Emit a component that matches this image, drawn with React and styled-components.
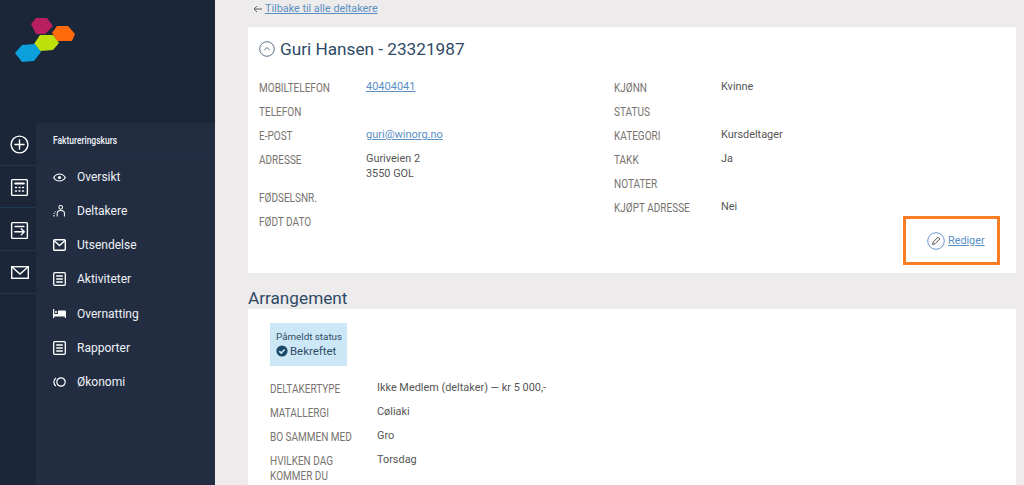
import React from 'react';
import styled, { createGlobalStyle } from 'styled-components';

const Global = createGlobalStyle`
  html, body {
    margin: 0;
    height: 485px;
    overflow: hidden;
    background: #edebeb;
    font-family: Roboto, "Liberation Sans", sans-serif;
  }
  * { box-sizing: border-box; }
`;

const Page = styled.div`
  display: flex;
  width: 1024px;
  height: 485px;
  overflow: hidden;
`;

const Sidebar = styled.aside`
  width: 215px;
  flex: none;
  display: flex;
  flex-direction: column;
  background: #1c2639;
`;

const LogoBox = styled.div`
  height: 123px;
  flex: none;
  padding: 17px 0 0 14px;
`;

const SideBody = styled.div`
  display: flex;
  flex: 1;
`;

const Rail = styled.div`
  width: 36px;
  flex: none;
`;

const RailItem = styled.div`
  height: 42.7px;
  display: flex;
  align-items: center;
  justify-content: center;
  padding: 2px 0 0 3px;
  border-bottom: 1px solid #1d3a55;
  color: #fff;
`;

const Panel = styled.nav`
  flex: 1;
  background: #222d42;
`;

const PanelHead = styled.div`
  height: 37px;
  padding: 0 0 1px 17px;
  display: flex;
  align-items: center;
  border-bottom: 1px solid #1e3048;
  color: #f2f4f7;
  font-size: 11px;
  font-weight: 500;
`;

const Squeeze = styled.span`
  display: inline-block;
  transform: scaleX(${p => p.$x || 0.77});
  transform-origin: left center;
  white-space: nowrap;
`;

const NavItem = styled.div`
  height: 34.15px;
  display: flex;
  align-items: center;
  padding-left: 17px;
  gap: 11px;
  color: #eef1f5;
  font-size: 12px;
  font-weight: 400;
`;

const NavIcon = styled.span`
  width: 13px;
  height: 14px;
  display: flex;
  align-items: center;
  justify-content: center;
  color: #fff;
`;

const Main = styled.main`
  flex: 1;
  padding: 0 8px 0 33px;
  min-width: 0;
`;

const BackRow = styled.div`
  height: 27px;
  display: flex;
  align-items: flex-start;
  padding: 2px 0 0 5px;
  gap: 3px;
  line-height: 14px;
  color: #5b6570;
`;

const BackArrow = styled.svg`
  margin-top: 3px;
`;

const Link = styled.a`
  color: #5a8fc4;
  text-decoration: underline;
  font-size: ${p => p.$size || '10.8px'};
`;

const Card = styled.section`
  position: relative;
  background: #fff;
  box-shadow: 0 0 1px rgba(0, 0, 0, 0.08);
`;

const PersonCard = styled(Card)`
  height: 246px;
  padding: 9px 11px 0;
`;

const Title = styled.h1`
  margin: 0 0 18px;
  height: 25px;
  display: flex;
  align-items: center;
  gap: 5px;
  font-size: 17.2px;
  font-weight: 400;
  color: #2f4a66;
`;

const Columns = styled.div`
  display: grid;
  grid-template-columns: 355px 1fr;
`;

const Row = styled.div`
  display: grid;
  grid-template-columns: 107px 1fr;
  min-height: ${p => p.$h || '24.1px'};
`;

const Label = styled.div`
  font-size: 13px;
  line-height: 15px;
  color: #77736f;
  padding-top: 1px;
`;

const Value = styled.div`
  font-size: 10.9px;
  line-height: 15px;
  color: #555;
`;

const EditBox = styled.div`
  position: absolute;
  left: 655px;
  top: 189px;
  width: 97px;
  height: 49px;
  border: 3px solid #f97d25;
  display: flex;
  align-items: center;
  padding-left: 21px;
  gap: 3px;
`;

const SectionTitle = styled.h2`
  margin: 0;
  height: 36px;
  padding-top: 15px;
  font-size: 17.2px;
  line-height: 20px;
  font-weight: 400;
  color: #2f4a66;
`;

const EventCard = styled(Card)`
  height: 200px;
  padding: 14px 22px 0;
`;

const StatusBox = styled.div`
  width: 77px;
  height: 43px;
  background: #cce8f6;
  padding: 7px 6px 0;
  margin-bottom: 14px;
  color: #2f4a66;
  white-space: nowrap;
`;

const StatusLabel = styled.div`
  font-size: 9.8px;
  line-height: 13px;
`;

const StatusValue = styled.div`
  display: flex;
  align-items: center;
  gap: 2px;
  font-size: 11.4px;
  line-height: 16px;
`;

const Hexagons = () => (
  <svg width="62" height="46" viewBox="14 17 62 46">
    <polygon points="31,24 36,18 47,18 53,26 45,34 36,34" fill="#b81f5e" />
    <polygon points="52,33 57,26 68,26 75,34 72,41 57,41" fill="#ff6a0a" />
    <polygon points="34,44 40,35 53,35 59,43 53,50 40,51" fill="#bfe10a" />
    <polygon points="15,53 22,45 35,44 41,52 34,61 22,62" fill="#0b9fdc" />
  </svg>
);

const Svg = ({ size = 14, children, sw = 1.6 }) => (
  <svg width={size} height={size} viewBox="0 0 24 24" fill="none" stroke="currentColor" strokeWidth={sw} strokeLinecap="round" strokeLinejoin="round">
    {children}
  </svg>
);

const PlusCircle = () => (
  <Svg size={21} sw={1.6}><circle cx="12" cy="12" r="9.6" /><path d="M12 6.8v10.4M6.8 12h10.4" /></Svg>
);
const CalcIcon = () => (
  <Svg size={21} sw={1.6}>
    <rect x="3" y="3" width="18" height="18" rx="1" />
    <path d="M7 7.5h10" strokeWidth="2.2" />
    <path d="M7.5 12h1M11.5 12h1M15.5 12h1M7.5 16h1M11.5 16h1M15.5 16h1" strokeWidth="1.8" />
  </Svg>
);
const ExportIcon = () => (
  <Svg size={21} sw={1.6}>
    <rect x="3" y="3" width="18" height="18" rx="1" />
    <path d="M7 7.5h10M6.5 13.5h11M14 10l3.5 3.5-3.5 3.5" />
  </Svg>
);
const MailBig = () => (
  <svg width="18" height="13" viewBox="0 0 18 13" fill="none" stroke="currentColor" strokeWidth="1.4">
    <rect x="0.7" y="0.7" width="16.6" height="11.6" />
    <path d="M1 1 9 8l8-7" />
  </svg>
);
const EyeIcon = () => (
  <svg width="13" height="9" viewBox="0 0 13 9" fill="none" stroke="currentColor" strokeWidth="1.2">
    <path d="M.7 4.5S2.8 1 6.5 1s5.8 3.5 5.8 3.5S10.2 8 6.5 8 .7 4.5.7 4.5z" />
    <circle cx="6.5" cy="4.5" r="1.6" fill="currentColor" stroke="none" />
  </svg>
);
const PeopleIcon = () => (
  <svg width="14" height="14" viewBox="0 0 14 14" fill="none" stroke="currentColor" strokeWidth="1.1">
    <circle cx="8.3" cy="3" r="2" />
    <path d="M4.5 13V9.5C4.5 7.5 6.3 6.5 8.3 6.5s4 1 4 3V13" />
    <path d="M1 13v-2c0-1.6.6-2.8 1.8-3.4" strokeDasharray="1.6 1" />
  </svg>
);
const MailSmall = () => (
  <svg width="13" height="12" viewBox="0 0 13 12" fill="none" stroke="currentColor" strokeWidth="1.4">
    <rect x="0.7" y="0.7" width="11.6" height="10.6" rx="1" />
    <path d="M1 1.5 6.5 6.5 12 1.5" />
  </svg>
);
const ListIcon = () => (
  <svg width="13" height="14" viewBox="0 0 13 14" fill="none" stroke="currentColor" strokeWidth="1.3">
    <rect x="0.7" y="0.7" width="11.6" height="12.6" rx="1" />
    <path d="M3.2 4h6.6M3.2 7h6.6M3.2 10h6.6" />
  </svg>
);
const BedIcon = () => (
  <svg width="13" height="9" viewBox="0 0 13 9" fill="currentColor">
    <path d="M0 0h1.2v5H13v4h-1.2V7.6H1.2V9H0z" />
    <path d="M5 1.5h7a1 1 0 0 1 1 1V5H5z" />
    <circle cx="3" cy="3" r="1.1" />
  </svg>
);
const CoinsIcon = () => (
  <svg width="13" height="10" viewBox="0 0 13 10" fill="none" stroke="currentColor" strokeWidth="1.2">
    <circle cx="8" cy="5" r="4.2" />
    <path d="M3 .9A5 5 0 0 0 3 9.1" />
  </svg>
);
const Chevron = () => (
  <svg width="16" height="16" viewBox="0 0 16 16" fill="none" stroke="#5b7288" strokeWidth="1">
    <circle cx="8" cy="8" r="7.3" />
    <path d="M5.3 9 8 6.5 10.7 9" />
  </svg>
);
const Pencil = () => (
  <svg width="18" height="18" viewBox="0 0 18 18" fill="none">
    <circle cx="9" cy="9" r="8.3" stroke="#5a8fc4" strokeWidth="0.9" />
    <path d="M5.5 12.5 6.2 10l4.8-4.8 1.8 1.8L8 11.8z" stroke="#555" strokeWidth="1" />
  </svg>
);
const CheckBadge = () => (
  <svg width="12" height="12" viewBox="0 0 12 12">
    <circle cx="6" cy="6" r="5.6" fill="#1b4b68" />
    <path d="M3.3 6.1 5.2 8l3.5-3.5" fill="none" stroke="#cce8f6" strokeWidth="1.6" />
  </svg>
);

const navItems = [
  ['Oversikt', <EyeIcon />],
  ['Deltakere', <PeopleIcon />],
  ['Utsendelse', <MailSmall />],
  ['Aktiviteter', <ListIcon />],
  ['Overnatting', <BedIcon />],
  ['Rapporter', <ListIcon />],
  ['Økonomi', <CoinsIcon />],
];

const Field = ({ label, h, children }) => (
  <Row $h={h}>
    <Label>{label.map(line => <div key={line}><Squeeze>{line}</Squeeze></div>)}</Label>
    <Value>{children}</Value>
  </Row>
);

export default function App() {
  return (
    <Page>
      <Global />
      <Sidebar>
        <LogoBox><Hexagons /></LogoBox>
        <SideBody>
          <Rail>
            <RailItem><PlusCircle /></RailItem>
            <RailItem><CalcIcon /></RailItem>
            <RailItem><ExportIcon /></RailItem>
            <RailItem><MailBig /></RailItem>
          </Rail>
          <Panel>
            <PanelHead><Squeeze>Faktureringskurs</Squeeze></PanelHead>
            {navItems.map(([name, icon]) => (
              <NavItem key={name}><NavIcon>{icon}</NavIcon>{name}</NavItem>
            ))}
          </Panel>
        </SideBody>
      </Sidebar>
      <Main>
        <BackRow>
          <BackArrow width="9" height="8" viewBox="0 0 9 8" fill="none" stroke="currentColor" strokeWidth="1">
            <path d="M9 4H1M4 1 1 4l3 3" />
          </BackArrow>
          <Link href="#">Tilbake til alle deltakere</Link>
        </BackRow>
        <PersonCard>
          <Title><Chevron />Guri Hansen - 23321987</Title>
          <Columns>
            <div>
              <Field label={['MOBILTELEFON']}><Link href="#" $size="11px">40404041</Link></Field>
              <Field label={['TELEFON']} />
              <Field label={['E-POST']}><Link href="#" $size="11px">guri@winorg.no</Link></Field>
              <Field label={['ADRESSE']} h="38px">Guriveien 2<br />3550 GOL</Field>
              <Field label={['FØDSELSNR.']} />
              <Field label={['FØDT DATO']} />
            </div>
            <div>
              <Field label={['KJØNN']}>Kvinne</Field>
              <Field label={['STATUS']} />
              <Field label={['KATEGORI']}>Kursdeltager</Field>
              <Field label={['TAKK']}>Ja</Field>
              <Field label={['NOTATER']} />
              <Field label={['KJØPT ADRESSE']}>Nei</Field>
            </div>
          </Columns>
          <EditBox><Pencil /><Link href="#">Rediger</Link></EditBox>
        </PersonCard>
        <SectionTitle>Arrangement</SectionTitle>
        <EventCard>
          <StatusBox>
            <StatusLabel>Påmeldt status</StatusLabel>
            <StatusValue><CheckBadge />Bekreftet</StatusValue>
          </StatusBox>
          <Field label={['DELTAKERTYPE']}>Ikke Medlem (deltaker) — kr 5 000,-</Field>
          <Field label={['MATALLERGI']}>Cøliaki</Field>
          <Field label={['BO SAMMEN MED']}>Gro</Field>
          <Field label={['HVILKEN DAG', 'KOMMER DU']}>Torsdag</Field>
        </EventCard>
      </Main>
    </Page>
  );
}
